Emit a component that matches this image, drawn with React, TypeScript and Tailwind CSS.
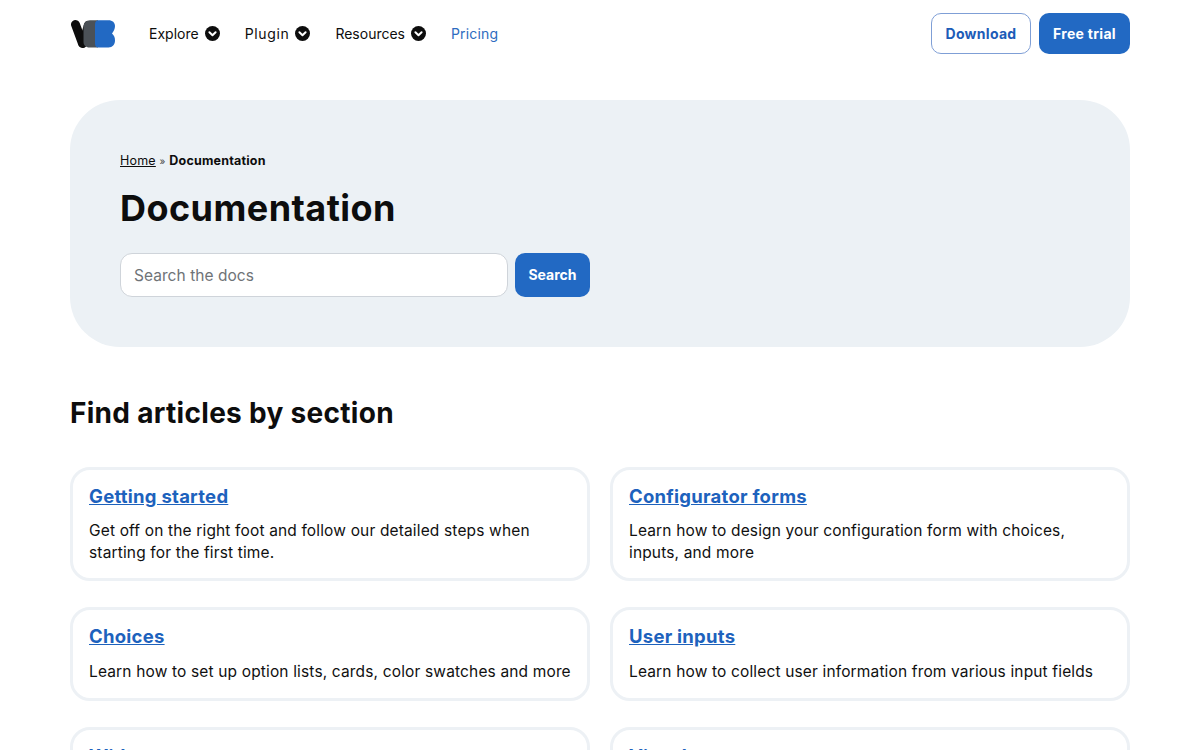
const font = "font-['Inter','Liberation_Sans',sans-serif]";

function Chevron() {
  return (
    <svg width="15" height="15" viewBox="0 0 15 15" className="shrink-0">
      <circle cx="7.5" cy="7.5" r="7.5" fill="#0d0d0d" />
      <path d="M4.4 6.2 7.5 9.2 10.6 6.2" fill="none" stroke="#fff" strokeWidth="2" strokeLinecap="round" strokeLinejoin="round" />
    </svg>
  );
}

function Logo() {
  return (
    <svg width="46" height="30" viewBox="0 0 46 30">
      <path d="M5.500 5.500 12.500 24.500" fill="none" stroke="#0d0d0d" strokeWidth="9" strokeLinecap="round" />
      <path d="M12.500 24.500 18 6" fill="none" stroke="#0d0d0d" strokeWidth="8" strokeLinecap="round" />
      <path d="M20 1.200H28V28.500H19.500C15.500 28.500 13.500 26 13.500 23V8C13.500 4 16 1.200 20 1.200Z" fill="#4b5157" />
      <path d="M28.500 1.200H38.500C42.500 1.200 45 3.500 45 7c0 3-1.300 5-3 7.500 2 2 3 3.500 3 7 0 4-2.500 7-6.500 7H28.500C26 28.500 25 27 25 24.500V5.500C25 3 26 1.200 28.500 1.200Z" fill="#2269c3" />
    </svg>
  );
}

function Card({ title, text, single }: { title: string; text: string; single?: boolean }) {
  return (
    <div className={single ? "min-h-[94px] rounded-[20px] border-[3px] border-[#edf1f5] bg-white px-[16px] pt-[13px] pb-[14px]" : "rounded-[20px] border-[3px] border-[#edf1f5] bg-white px-[16px] pt-[13px] pb-[14px]"}>
      <a className="block text-[18.5px] leading-[26px] font-bold text-[#1d62bd] underline tracking-[0.25px]">{title}</a>
      <p className={single ? "mt-[12px] text-[15.5px] leading-[22px] text-[#101010] tracking-[0.15px]" : "mt-[11px] text-[15.5px] leading-[22px] text-[#101010] tracking-[0.15px]"}>{text}</p>
    </div>
  );
}

export default function App() {
  return (
    <div className={`${font} h-[750px] overflow-hidden bg-white px-[70px] text-[#0d0d0d]`}>
      <header className="flex h-[67px] items-center justify-between">
        <div className="flex items-center">
          <Logo />
          <nav className="ml-[33px] flex items-center gap-[25px] text-[14px]">
            <a className="flex items-center gap-[6px]">Explore <Chevron /></a>
            <a className="flex items-center gap-[6px] tracking-[0.65px]">Plugin <Chevron /></a>
            <a className="flex items-center gap-[6px]">Resources <Chevron /></a>
            <a className="tracking-[0.15px] text-[#2d6cc0]">Pricing</a>
          </nav>
        </div>
        <div className="flex items-center gap-[8px] text-[14px] font-bold tracking-[0.3px]">
          <a className="flex h-[41px] w-[100px] items-center justify-center rounded-[10px] border border-[#7f9fd6] bg-white text-[#1d5cb8]">Download</a>
          <a className="flex h-[41px] w-[91px] items-center justify-center rounded-[10px] bg-[#2269c3] text-white">Free trial</a>
        </div>
      </header>

      <section className="mt-[33px] h-[247px] rounded-[50px] bg-[#ecf1f5] px-[50px] pt-[54px]">
        <div className="text-[12.5px] leading-[14px] tracking-[0.2px]"><span className="underline">Home</span> <span className="text-[10px] text-[#444]">»</span> <span className="font-bold">Documentation</span></div>
        <h1 className="mt-[19px] text-[36px] leading-[42px] font-bold tracking-[0.45px] text-[#0d0d0d]">Documentation</h1>
        <div className="mt-[24px] flex gap-[7px]">
          <div className="flex h-[44px] w-[388px] items-center rounded-[12px] border border-[#cfd4da] bg-white px-[13px] pt-[1px] text-[15.5px] tracking-[0.05px] text-[#6f7377]">Search the docs</div>
          <button className="h-[44px] w-[75px] rounded-[10px] bg-[#2269c3] pb-[1px] text-[14px] font-bold text-white">Search</button>
        </div>
      </section>

      <h2 className="mt-[49px] text-[28px] leading-[34px] font-bold tracking-[0.3px]">Find articles by section</h2>

      <div className="mt-[37px] grid grid-cols-2 gap-x-[20px] gap-y-[26px]">
        <Card title="Getting started" text="Get off on the right foot and follow our detailed steps when starting for the first time." />
        <Card title="Configurator forms" text="Learn how to design your configuration form with choices, inputs, and more" />
        <Card single title="Choices" text="Learn how to set up option lists, cards, color swatches and more" />
        <Card single title="User inputs" text="Learn how to collect user information from various input fields" />
        <Card single title="Widgets" text="Learn how to add widgets to your pages" />
        <Card single title="Visual" text="Learn how to display your configurator" />
      </div>
    </div>
  );
}
